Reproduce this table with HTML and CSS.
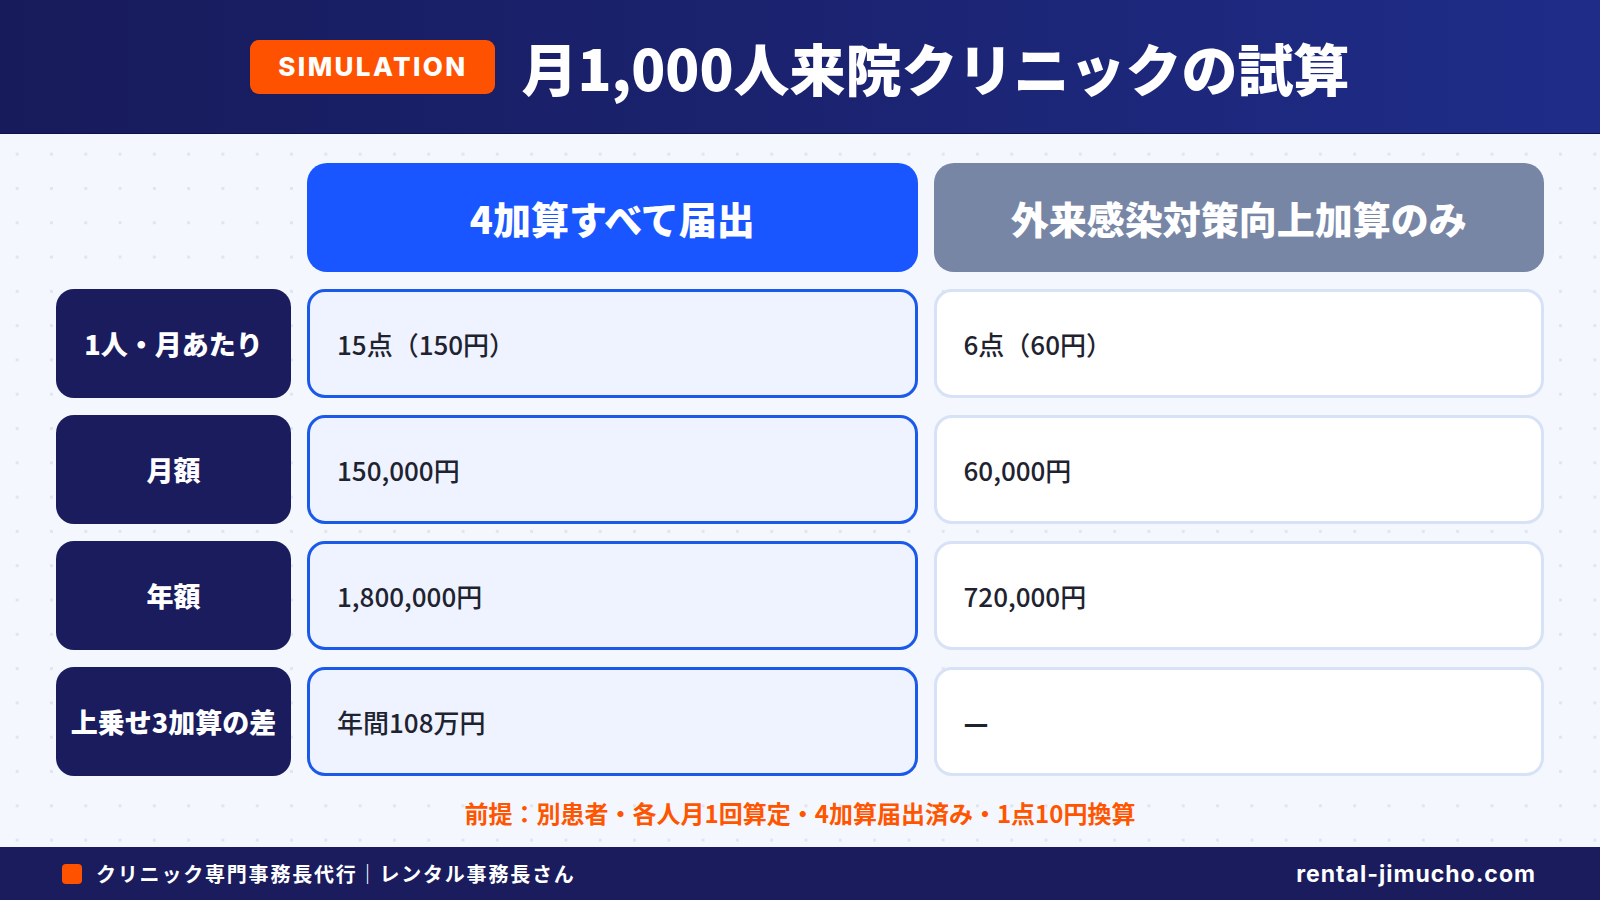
FILE: index.html
```html
<!DOCTYPE html>
<html lang="ja">
<head>
<meta charset="utf-8">
<title>月1,000人来院クリニックの試算</title>
<link rel="stylesheet" href="styles.css">
</head>
<body>
<header class="topbar">
  <span class="badge">SIMULATION</span>
  <h1 class="title">月1,000人来院クリニックの試算</h1>
</header>
<main class="content">
  <div class="grid">
    <div class="corner"></div>
    <div class="colhead colhead-main">4加算すべて届出</div>
    <div class="colhead colhead-sub">外来感染対策向上加算のみ</div>

    <div class="label">1人・月あたり</div>
    <div class="cell cell-main">15点（150円）</div>
    <div class="cell cell-sub">6点（60円）</div>

    <div class="label">月額</div>
    <div class="cell cell-main">150,000円</div>
    <div class="cell cell-sub">60,000円</div>

    <div class="label">年額</div>
    <div class="cell cell-main">1,800,000円</div>
    <div class="cell cell-sub">720,000円</div>

    <div class="label">上乗せ3加算の差</div>
    <div class="cell cell-main">年間108万円</div>
    <div class="cell cell-sub"><span class="dash">—</span></div>
  </div>
  <p class="note">前提：別患者・各人月1回算定・4加算届出済み・1点10円換算</p>
</main>
<footer class="footbar">
  <div class="brand"><span class="brand-mark"></span><span class="brand-text">クリニック専門事務長代行｜レンタル事務長さん</span></div>
  <div class="site">rental-jimucho.com</div>
</footer>
</body>
</html>
```

FILE: styles.css
```css
* { box-sizing: border-box; }
html, body { margin: 0; padding: 0; }
body {
  width: 1600px;
  height: 900px;
  display: flex;
  flex-direction: column;
  font-family: "Noto Sans CJK JP", "Noto Sans", sans-serif;
  background: #f4f7fd;
  overflow: hidden;
}

.topbar {
  height: 134px;
  flex: none;
  display: flex;
  align-items: center;
  justify-content: center;
  gap: 26px;
  background: linear-gradient(90deg, #171b5b 0%, #1b2370 50%, #1f2d89 100%);
  border-bottom: 1px solid #0f1448;
}
.badge {
  display: flex;
  align-items: center;
  justify-content: center;
  width: 245px;
  height: 54px;
  background: #ff5200;
  border-radius: 9px;
  color: #fff;
  font-family: Inter, "Noto Sans", sans-serif;
  font-weight: 800;
  font-size: 26px;
  letter-spacing: 2.4px;
}
.title {
  margin: 0;
  color: #fff;
  font-weight: 900;
  font-size: 56px;
  line-height: 1;
  letter-spacing: 0;
}

.content {
  flex: 1;
  padding: 29px 56px 0;
  background-color: #f4f7fd;
  background-image: radial-gradient(circle, #e0e5f0 1.5px, transparent 1.7px);
  background-size: 34.3px 34.3px;
  background-position: 0 3px;
}
.grid {
  display: grid;
  grid-template-columns: 235px 1fr 1fr;
  grid-auto-rows: 109px;
  column-gap: 16px;
  row-gap: 17px;
}
.colhead {
  display: flex;
  align-items: center;
  justify-content: center;
  border-radius: 20px;
  color: #fff;
  font-weight: 900;
  font-size: 38px;
}
.colhead-main { background: #1a56ff; }
.colhead-sub { background: #7886a6; }

.label {
  display: flex;
  align-items: center;
  justify-content: center;
  border-radius: 18px;
  background: #1a1c5e;
  color: #fff;
  font-weight: 900;
  font-size: 27px;
  white-space: nowrap;
}

.cell {
  display: flex;
  align-items: center;
  padding-left: 27px;
  border-radius: 18px;
  border: 3px solid;
  color: #1f2330;
  font-weight: 500;
  font-size: 26px;
}
.cell-main { background: #eef3ff; border-color: #1b5ae8; }
.cell-sub { background: #ffffff; border-color: #d8e2f6; }
.dash { font-weight: 900; display: inline-block; transform: scaleX(1.05); }

.note {
  margin: 21px 0 0;
  text-align: center;
  color: #ff5500;
  font-weight: 700;
  font-size: 24px;
  line-height: 32px;
}

.footbar {
  height: 53px;
  flex: none;
  display: flex;
  align-items: center;
  justify-content: space-between;
  padding: 0 64px 0 62px;
  background: #1a1c5e;
  color: #fff;
}
.brand { display: flex; align-items: center; gap: 14px; }
.brand-mark {
  width: 20px;
  height: 20px;
  border-radius: 4px;
  background: #ff5200;
}
.brand-text {
  font-weight: 700;
  font-size: 20px;
  letter-spacing: 1.8px;
}
.site {
  font-family: Inter, "Noto Sans", sans-serif;
  font-weight: 700;
  font-size: 23px;
  letter-spacing: 1px;
}
```
